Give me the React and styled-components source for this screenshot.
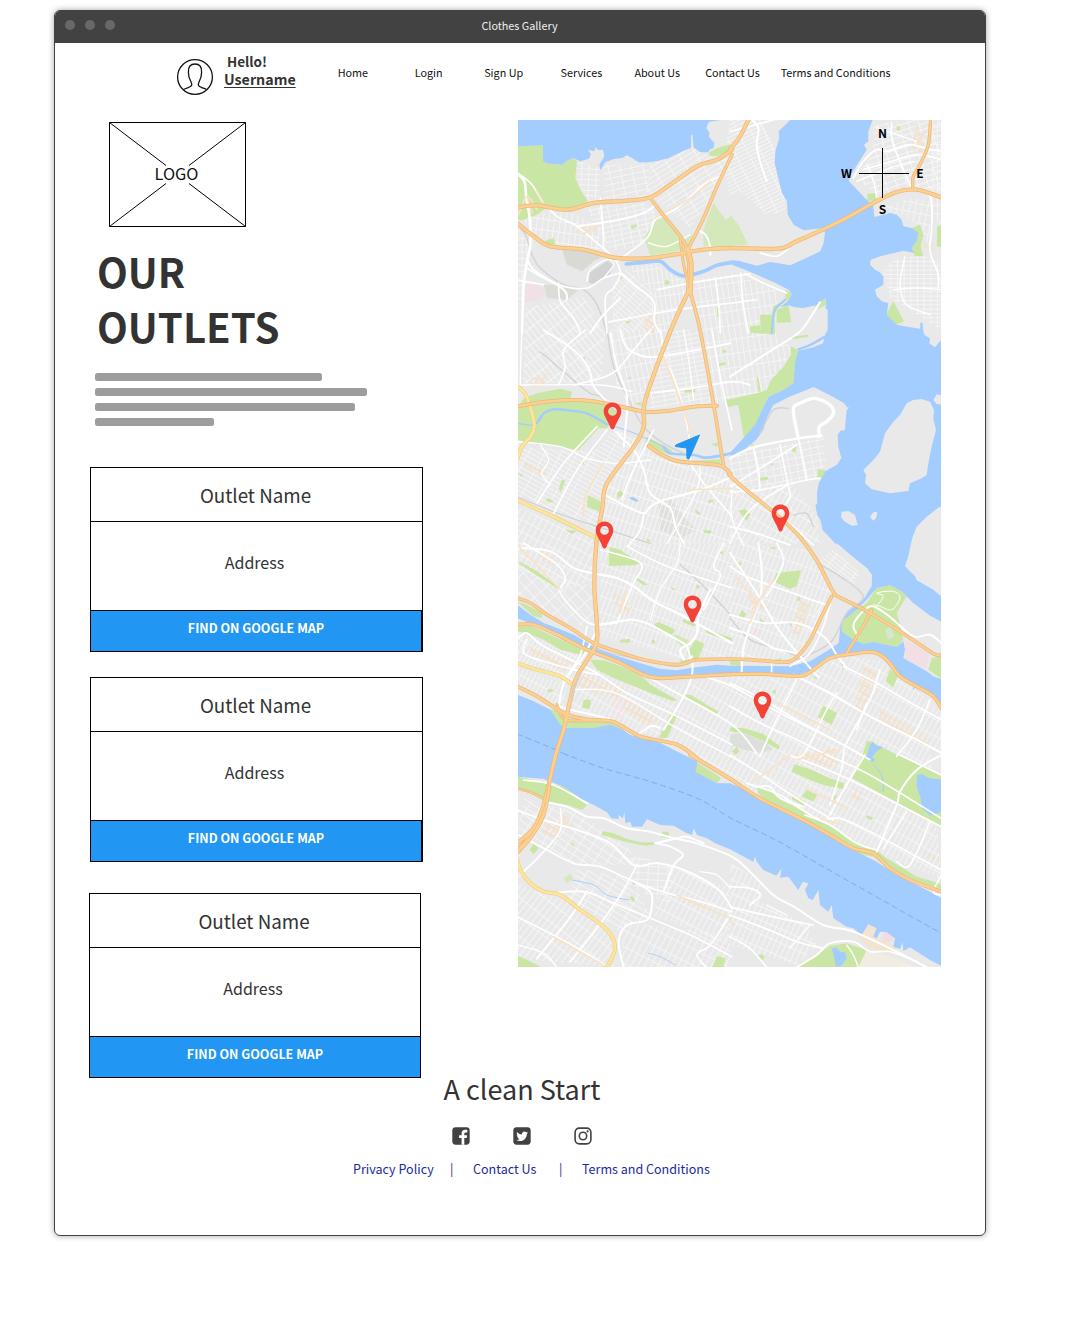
import React from "react";
import styled, { createGlobalStyle, css } from "styled-components";
import { FaTwitter } from "react-icons/fa";

const Global = createGlobalStyle`
  *, *::before, *::after { box-sizing: border-box; }
  body {
    margin: 0;
    background: #fff;
    font-family: "Noto Sans CJK SC", "Noto Sans", sans-serif;
    color: #333;
  }
`;

const Page = styled.div`
  min-height: 1335px;
  padding: 10px 0 0 54px;
`;

const Window = styled.div`
  display: flex;
  flex-direction: column;
  width: 932px;
  height: 1226px;
  border: 1px solid #424242;
  border-radius: 6px;
  box-shadow: 0 0 6px rgba(0, 0, 0, 0.35);
  overflow: hidden;
`;

const TitleBar = styled.div`
  display: grid;
  grid-template-columns: 120px 1fr 121px;
  height: 32px;
  flex: none;
  background: #424242;
`;

const Lights = styled.div`
  display: flex;
  gap: 10px;
  padding: 9px 0 0 10.4px;
`;

const Light = styled.span`
  width: 10px;
  height: 10px;
  border-radius: 50%;
  background: #686868;
`;

const WindowTitle = styled.span`
  color: #eee;
  font-size: 10.8px;
  line-height: 28px;
  text-align: center;
`;

const Header = styled.header`
  display: flex;
  height: 77px;
  padding-left: 121px;
`;

const Avatar = styled.svg`
  width: 38px;
  height: 38px;
  margin-top: 15px;
  fill: none;
  stroke: #111;
  stroke-width: 1.3;
`;

const Greeting = styled.div`
  display: flex;
  flex-direction: column;
  width: 91px;
  padding: 9px 0 0 10px;
  font-size: 13.5px;
  font-weight: 700;
  line-height: 18px;
`;

const Hello = styled.span`
  padding-left: 3px;
`;

const Username = styled.a`
  font-size: 14.25px;
  text-decoration: underline;
  text-decoration-thickness: 1px;
  text-underline-offset: 2px;
`;

const Nav = styled.nav`
  display: flex;
  padding-top: 19px;
  margin-left: 10px;
`;

const NavLink = styled.a`
  width: ${(p) => p.$w}px;
  font-size: 10.8px;
  line-height: 20px;
  text-align: center;
  color: #111;
`;

const Main = styled.main`
  display: grid;
  grid-template-columns: 463px 423px;
  height: 954px;
  flex: none;
`;

const Column = styled.section`
  display: flex;
  flex-direction: column;
  padding: 2px 0 0 34px;
`;

const Logo = styled.div`
  display: grid;
  place-items: center;
  width: 137px;
  height: 105px;
  margin-left: 20px;
  > * { grid-area: 1 / 1; }
`;

const LogoLines = styled.svg`
  width: 137px;
  height: 105px;
  fill: none;
  stroke: #000;
  stroke-width: 1;
`;

const LogoText = styled.span`
  font-size: 16.4px;
  line-height: 18px;
  color: #111;
  margin: 0 2px 4px 0;
`;

const Heading = styled.h1`
  width: 220px;
  margin: 16px 0 0 8px;
  font-size: 40.1px;
  font-weight: 700;
  line-height: 55px;
`;

const Blurb = styled.div`
  display: flex;
  flex-direction: column;
  gap: 7px;
  margin: 20px 0 0 6px;
`;

const BlurbLine = styled.span`
  width: ${(p) => p.$w}px;
  height: 8px;
  border-radius: 2.5px;
  background: #9d9d9d;
`;

const Cards = styled.div`
  margin-top: 41px;
`;

const Card = styled.article`
  display: flex;
  flex-direction: column;
  width: 333px;
  height: 185px;
  margin: 0 0 25px 1px;
  border: 1px solid #000;
  text-align: center;
  ${(p) => p.$last && css`
    width: 332px;
    margin: 31px 0 0 0;
  `}
`;

const OutletName = styled.h2`
  margin: 0;
  height: 54px;
  padding-right: 2px;
  border-bottom: 1px solid #000;
  font-size: 18.8px;
  font-weight: 400;
  line-height: 54px;
`;

const Address = styled.p`
  margin: 0;
  height: 88px;
  padding-right: 4px;
  font-size: 16px;
  line-height: 80px;
`;

const FindButton = styled.button`
  height: 41px;
  padding: 0 0 7px;
  border: 0 solid #000;
  border-top-width: 1px;
  border-right-width: ${(p) => (p.$flush ? 0 : 1)}px;
  background: #2196f3;
  color: #fff;
  font: 700 12.5px/18px "Noto Sans CJK SC", "Noto Sans", sans-serif;
`;

const MapFrame = styled.section`
  display: grid;
  width: 423px;
  height: 847px;
  position: relative;
`;

const MapArt = styled.svg`
  display: block;
  width: 423px;
  height: 847px;
`;

const Marker = styled.svg`
  position: absolute;
  overflow: visible;
`;

const Compass = styled.div`
  position: absolute;
  left: 320px;
  top: 5px;
  display: grid;
  grid-template: 19px 57px 19px / 17px 56px 18px;
  place-items: center;
  color: #000;
  font-size: 12px;
  font-weight: 700;
  line-height: 18px;
`;

const CompassPoint = styled.span`
  grid-area: ${(p) => p.$area};
  ${(p) => p.$pole && css`
    align-self: start;
    line-height: 15px;
    margin-right: 1px;
  `}
`;

const CompassCross = styled.svg`
  grid-area: 2 / 2;
  width: 52px;
  height: 52px;
  stroke: #000;
  stroke-width: 1;
`;

const Footer = styled.footer`
  display: flex;
  flex-direction: column;
  width: 400px;
  margin-left: 267px;
`;

const Slogan = styled.h3`
  margin: 0;
  font-size: 27px;
  font-weight: 400;
  line-height: 30px;
  text-align: center;
`;

const Social = styled.div`
  display: flex;
  justify-content: center;
  gap: 41px;
  margin: 22px 0 0 0;
  color: #424242;
`;

const SocialIcon = styled.svg`
  display: block;
  width: 20px;
  height: 20px;
`;

const Legal = styled.div`
  display: grid;
  grid-template-columns: 97px 23px 86px 23px auto;
  padding-left: 31px;
  margin-top: 12px;
  color: #1a2a9c;
  font-size: 12.55px;
  line-height: 22px;
  white-space: nowrap;
`;

const LegalItem = styled.a`
  color: inherit;
`;

/* The map is drawn on eight sheets, each with its own origin. */
const SHEETS = {
  A: [0, 0], B: [639, 0],
  C: [0, 636], D: [639, 636],
  E: [0, 1275], F: [639, 1275],
  G: [0, 1911], H: [639, 1911],
};

function points(spec) {
  let origin = SHEETS.A;
  const out = [];
  spec.trim().split(/\s+/).forEach((t) => {
    if (SHEETS[t]) { origin = SHEETS[t]; return; }
    const [x, y] = t.split(",").map(Number);
    out.push([x + origin[0], y + origin[1]]);
  });
  return out;
}

const area = (spec) => "M" + points(spec).map((p) => p.join(" ")).join("L") + "Z";

function road(spec) {
  const p = points(spec);
  let d = `M${p[0][0]} ${p[0][1]}`;
  for (let i = 0; i < p.length - 1; i++) {
    const a = p[i - 1] || p[i], b = p[i], c = p[i + 1], e = p[i + 2] || c;
    d += `C${b[0] + (c[0] - a[0]) / 6} ${b[1] + (c[1] - a[1]) / 6} ${c[0] - (e[0] - b[0]) / 6} ${c[1] - (e[1] - b[1]) / 6} ${c[0]} ${c[1]}`;
  }
  return d;
}

const WATER = [
  "A 0,0 610,6 575,12 568,30 578,45 575,55 592,75 590,90 577,95 575,103 550,103 530,88 526,50 522,50 522,90 500,98 480,108 455,120 425,128 395,133 365,133 345,120 330,112 315,120 290,123 265,133 250,157 247,140 262,115 258,95 245,97 235,88 232,100 212,95 222,108 216,122 190,130 168,120 150,128 135,141 115,138 95,137 78,130 78,82 0,85",
  "B 187,0 146,40 148,60 136,100 134,135 146,185 156,225 171,250 173,290 191,320 221,337 281,330 285,345 281,375 271,400 246,412 181,442 121,432 81,443 51,435 26,428 0,428 0,438 45,455 91,475 141,497 176,515 186,527 173,550 150,568 176,562 195,568 221,570 261,560 286,540 289,560 286,570 293,575 293,645 D 292,0 286,12 279,40 250,52 205,62 196,90 190,160 160,180 116,200 96,240 75,285 40,325 0,368 0,377 35,365 78,330 100,300 112,260 130,225 175,202 251,171 306,199 341,219 354,234 362,228 350,240 347,270 345,300 330,303 323,315 325,350 334,384 321,404 286,424 275,445 266,460 261,490 262,520 256,525 262,555 271,570 278,600 320,645 F 320,0 361,35 411,75 426,95 425,130 400,170 355,205 332,240 326,300 290,325 240,355 200,365 170,370 0,368 E 600,365 520,375 480,382 430,378 350,355 290,335 230,310 170,275 120,255 80,240 40,215 0,185 0,225 30,237 90,265 150,297 200,320 290,350 380,393 440,402 540,394 645,390 F 0,392 200,397 250,380 300,347 350,330 420,325 450,335 490,380 540,420 600,450 645,500 645,412 610,400 590,385 520,345 525,320 520,295 500,312 470,305 430,297 400,302 370,290 335,265 337,235 380,200 410,170 440,135 480,127 515,145 535,165 550,180 600,218 645,242 645,170 610,140 560,112 555,100 525,70 535,40 543,0 D 548,620 560,590 590,560 625,533 645,525 645,30 634,30 625,40 615,52 598,40 600,25 583,15 580,0 B 580,645 578,616 572,612 570,632 540,628 500,620 470,590 475,555 455,550 440,535 435,515 460,500 460,475 448,462 435,455 420,440 422,425 450,415 520,398 552,405 545,390 560,370 565,345 545,330 520,325 515,305 500,290 480,285 433,297 430,265 410,245 357,190 360,175 410,95 402,80 415,70 415,40 430,0",
  "E 0,455 50,475 100,500 130,545 150,555 230,555 280,545 370,580 430,600 500,635 540,655 G 540,30 535,50 600,85 639,85 H 60,110 100,140 200,185 300,240 380,290 440,320 500,360 590,405 645,435 645,637 600,615 540,577 520,588 518,562 510,582 490,575 495,550 470,532 450,530 440,550 430,545 440,520 415,508 395,540 370,520 350,515 310,490 305,450 295,470 270,450 265,405 248,435 235,430 225,405 235,385 218,380 205,405 175,365 150,368 155,340 140,362 100,345 80,320 75,305 70,320 0,283 G 595,265 570,250 540,240 530,220 525,240 510,235 470,212 430,210 390,193 375,215 345,215 340,200 325,205 322,170 318,190 305,180 305,192 283,190 270,172 230,150 190,130 140,95 80,72 0,65",
  "H 562,60 575,58 600,70 645,75 645,170 600,180 575,160 572,130 560,95",
  "H 305,580 320,578 330,590 345,592 350,610 335,632 318,636 312,605",
  "F 420,605 430,597 440,608 460,612 440,625 425,645 410,645",
  "H 408,0 420,0 435,14 430,22 415,15",
  "C 335,502 350,502 365,512 360,516 345,510",
];

const ISLANDS = [
  "D 575,207 600,215 612,240 610,265 618,300 605,350 595,400 590,435 575,445 540,460 535,483 480,490 425,478 405,460 408,435 400,420 430,390 450,365 465,310 490,275 510,255 530,220 550,210",
  "D 335,545 355,543 375,555 383,585 365,587 345,575 333,562",
  "D 420,560 432,545 442,547 438,565 430,572",
  "D 610,210 620,193 645,198 645,225 620,222",
];

const PARKS = [
  "A 0,85 78,82 78,130 95,137 115,138 135,141 150,128 168,120 180,130 175,180 190,215 213,250 160,270 90,268 60,290 10,308 0,300",
  "A 575,105 600,90 645,78 645,95 600,115 580,115",
  "A 80,370 110,360 115,378 95,385", "A 340,325 358,318 360,325 345,333",
  "A 443,487 457,487 457,500 443,500", "A 600,570 608,570 610,597 600,597", "A 303,480 310,472 318,482", "A 325,610 345,608 330,617",
  "B 412,227 435,225 438,245 412,250",
  "B 545,330 570,320 580,350 572,385 580,415 555,415 545,390 560,370",
  "B 622,325 645,320 645,390 620,385", "B 490,550 522,610 495,622 460,605", "B 500,25 510,25 510,38 500,36",
  "B 167,515 187,525 175,545 140,570 133,600 135,645 92,645 90,590 125,590 130,565 165,545",
  "B 140,575 175,562 184,612 140,615", "B 60,625 90,622 90,645 62,645", "B 240,555 265,540 285,540 288,560 265,572",
  "D 60,0 135,0 133,14 65,8", "D 183,20 235,14 235,20 185,28",
  "D 182,48 205,62 196,90 190,160 160,180 116,200 96,240 75,300 65,335 42,325 25,225 0,228 0,208 80,190 110,180 123,150 160,110 183,75",
  "C 20,205 60,190 130,176 165,185 160,205 240,215 290,235 300,260 270,295 245,295 185,360 0,330 0,240",
  "C 503,180 535,178 535,186 503,188", "C 605,100 625,97 625,105 605,108", "C 625,208 645,208 645,230 628,230", "C 617,60 628,60 628,68 617,68",
  "C 193,82 205,82 205,88 193,88", "C 330,145 340,140 342,148", "C 352,220 375,217 372,228",
  "C 390,320 425,340 465,360 460,375 420,360 385,338", "C 490,395 610,388 610,400 520,405",
  "C 212,495 250,513 248,545 210,530", "C 300,490 312,480 320,493 302,507", "C 125,475 135,448 145,452 132,487",
  "C 85,510 95,504 112,515 95,518", "C 145,600 180,602 165,613", "C 558,600 585,602 580,612 562,608", "C 535,538 550,550 545,556 535,545",
  "C 572,512 588,508 588,516 575,518", "C 580,342 605,338 600,350", "C 3,428 18,436 12,440", "C 190,397 200,394 202,405",
  "C 260,465 272,462 270,475 258,480", "C 385,625 402,632 395,636",
  "D 263,418 286,420 280,445 262,443", "D 187,350 198,346 198,368 187,365", "D 90,443 115,440 112,450 90,452", "D 25,542 45,537 62,553 50,573",
  "D 80,142 85,142 92,185 85,185", "D 60,338 65,335 73,355 68,358", "D 120,402 130,398 128,408",
  "E 277,12 310,20 370,62 350,67 275,69", "E 358,102 392,125 380,127 358,112", "E 413,243 425,237 475,260 465,275 415,257",
  "E 535,290 562,302 545,345 530,350 510,330", "E 565,258 645,285 645,298 570,270", "E 497,228 540,245 530,250 497,238",
  "E 500,455 520,455 603,505 600,513 560,495 510,468",
  "E 460,515 482,515 450,585 425,585", "E 200,470 222,470 218,497 195,495", "E 90,440 107,438 108,446 93,448",
  "E 460,132 475,138 470,143", "E 537,126 550,128 545,138 538,137", "E 405,290 415,293 412,303 405,300", "E 310,290 340,288 338,300 308,298",
  "E 0,175 30,185 75,210 75,225 50,220", "E 0,250 45,250 120,285 210,325 190,335 130,320 80,290 30,270 0,265",
  "E 220,350 260,352 300,365 370,395 400,425 480,470 470,475 400,450 350,430 290,405 240,380",
  "E 100,500 125,500 150,530 270,535 330,555 375,585 330,572 280,548 230,555 160,555 130,552",
  "E 5,55 60,85 130,135 125,138 55,95 5,60", "E 487,350 520,350 515,362 495,360", "E 605,27 618,25 618,35",
  "F 140,90 213,82 200,130 180,138 130,115", "F 35,200 48,212 40,228 25,222", "F 90,225 102,235 98,245 90,240", "F 205,160 212,162 208,175 200,172",
  "F 175,240 187,232 185,252", "F 120,12 137,12 132,20", "F 24,58 34,58 34,66 24,66",
  "F 280,488 321,510 305,545 263,522", "F 480,378 503,400 490,433 467,415", "F 125,445 138,440 136,455", "F 242,400 265,402 258,408", "F 335,360 345,365 338,383",
  "F 410,180 440,135 480,127 515,145 530,160 500,210 510,240 520,290 500,312 470,305 430,297 400,302 370,290 335,265 337,235 380,200",
  "F 605,345 645,340 645,415 595,380", "F 605,145 645,165 645,172 608,155",
  "F 0,553 40,555 100,573 150,610 145,620 100,595 50,572 0,565", "F 5,625 20,612 28,625 18,636",
  "F 425,597 510,640 645,700 H 634,70 634,215 365,68 398,0 415,-15 F 400,640",
  "F 0,352 30,355 30,368 0,365", "F 135,350 155,345 150,360", "F 410,595 430,595 410,645 395,645",
  "G 0,65 40,73 90,82 145,97 210,150 195,165 150,150 95,145 60,125 0,98", "G 530,15 600,60 612,70 600,85 530,50",
  "G 255,228 290,235 330,252 370,262 415,262 425,268 385,272 330,262 255,240", "G 50,265 65,280 50,297 38,285", "G 435,230 455,230 455,248 432,246",
  "G 160,262 172,268 168,275", "G 337,428 345,422 355,435 350,440", "G 0,600 30,615 75,637 0,637", "G 585,637 600,603 625,610 620,637", "G 345,382 355,385 350,392",
  "H 80,98 115,105 155,135 230,175 300,210 370,255 400,275 440,285 470,310 520,340 560,365 645,390 645,405 560,380 480,345 430,305 370,295 300,250 200,198 120,150 85,115",
  "H 192,28 240,42 300,70 342,85 340,102 280,90 240,75 185,50", "H 187,122 225,140 220,152 185,133", "H 230,105 262,120 250,140 215,125",
  "H 410,180 430,188 425,196 408,188", "H 85,602 95,597 105,605 98,615 85,612", "H 305,125 320,120 315,135",
  "H 300,572 350,565 410,585 385,637 200,637 260,600",
];

const PALE_PARKS = [
  "A 415,305 440,300 480,340 500,370 525,345 525,370 500,395 400,413 382,360",
  "A 590,255 625,305 645,295 645,385 560,385 558,340 575,290",
  "B 0,290 25,320 55,380 0,382",
  "G 140,370 160,358 168,370 150,385",
  "E 460,280 480,275 520,295 500,315",
];

const PALE = [
  ["#dadad4", "A 135,395 180,398 200,392 260,415 230,430 195,460 150,440"],
  ["#d3d3d3", "A 218,465 270,428 288,440 278,470 235,497 215,495"],
  ["#dcdcd6", "A 80,500 130,500 185,515 150,545 90,540"],
  ["#f1e0e6", "A 25,500 60,498 88,522 70,545 25,552"],
  ["#f1dfe4", "F 525,290 560,305 598,335 585,377 525,345"],
  ["#f1e3e6", "E 290,470 330,475 315,530 285,505"],
  ["#f0e1e5", "F 65,255 95,252 95,275 70,275"],
  ["#e0e0dd", "C 425,515 460,505 500,560 540,600 490,625 430,600"],
  ["#f2e4d0", "H 380,540 410,508 440,520 440,550 500,575 500,600 420,580"],
  ["#f0dde3", "H 460,532 488,540 490,560 460,560"],
  ["#f2ede2", "H 400,590 470,600 560,637 385,637"],
];

/* outline, rotation, block width, block height */
const BLOCKS = [
  ["A 180,130 250,150 245,250 215,250 180,185", 2, 22, 16],
  ["A 260,140 400,140 390,235 260,245", 78, 18, 34],
  ["A 400,135 520,90 640,130 610,200 520,330 420,245 385,230", -32, 44, 14],
  ["A 20,310 90,280 170,285 250,330 250,395 120,380 60,350", 8, 17, 32],
  ["A 210,270 380,255 430,290 380,380 280,400", -12, 26, 15],
  ["A 0,330 35,370 20,560 0,560", 0, 14, 20],
  ["A 25,570 200,535 265,645 C 250,160 20,160", -38, 15, 40],
  ["A 285,500 330,450 410,530 410,645 290,640", 42, 36, 12],
  ["A 330,440 420,440 500,490 510,520 460,640 410,640 400,520", -8, 14, 42],
  ["A 530,485 640,465 B 150,520 130,640 D 190,60 100,200 0,210 C 575,225 550,0 A 535,540", -9, 17, 42],
  ["C 270,0 450,0 390,200 340,230 290,150", -12, 16, 42],
  ["C 470,0 550,0 585,230 400,235 400,160", -10, 36, 14],
  ["C 0,350 230,365 290,300 370,330 265,460 240,600 0,510", 29, 43, 13],
  ["C 300,300 380,340 480,400 610,420 645,450 645,640 250,640 270,470 350,360", 18, 14, 42],
  ["C 0,530 240,630 E 230,110 130,150 0,70", 28, 18, 32],
  ["E 250,0 645,0 645,340 500,350 250,280", 20, 14, 45],
  ["E 0,70 230,130 230,260 100,220 0,160", -42, 25, 38],
  ["E 0,265 200,340 160,430 0,360", 28, 12, 32],
  ["E 0,370 150,430 140,490 0,440", 28, 13, 35],
  ["E 240,370 440,430 640,400 F 200,405 340,340 450,350 640,510 640,620 600,620 H 634,370 450,300 0,75 G 530,0 E 370,570 160,490 190,390", 29, 15, 44],
  ["A 620,130 B 0,0 90,0 130,80 170,280 110,290 30,220 0,240", -26, 36, 11],
  ["B 430,20 590,0 640,10 640,220 560,210 440,230 380,180 430,100", -18, 30, 17],
  ["B 600,10 640,10 640,320 600,300", 0, 14, 26],
  ["B 455,270 540,240 600,250 600,400 570,320 510,290", 12, 18, 28],
  ["B 490,425 580,410 640,440 640,640 580,600 480,540 460,460", 0, 20, 13],
  ["D 0,375 280,320 290,400 265,445 0,480", -11, 24, 20],
  ["D 0,490 180,450 260,560 270,640 0,640", 30, 16, 38],
  ["F 0,0 230,20 310,150 220,320 130,350 0,345", 20, 14, 44],
  ["F 310,20 390,90 370,130 260,60", 38, 40, 11],
  ["F 265,170 310,180 200,350 170,350 230,300", -58, 30, 12],
  ["G 20,130 180,170 330,270 370,330 180,330 0,240", 33, 32, 20],
  ["G 0,380 60,410 130,430 220,480 290,560 290,637 0,610", -52, 46, 16],
  ["G 340,300 470,330 460,450 350,400", 3, 30, 20],
  ["G 180,340 340,370 400,480 310,530 150,430", 31, 42, 16],
  ["G 320,500 640,540 640,637 310,637", 27, 18, 44],
  ["G 470,340 640,400 640,570 400,480", 28, 16, 44],
  ["H 0,320 90,380 100,450 220,500 260,570 200,630 0,570", 24, 16, 38],
];

const LAWNS = [
  ["#dde0da", "F 0,575 40,568 75,585 110,600 130,620 90,630 40,620 0,605"],
  ["#d5e7cd", "F 465,262 480,250 495,280 475,290"],
];

const HATCH_TINT = [
  "E 200,390 330,440 300,470 180,430", "E 40,310 170,360 150,390 40,340", "E 320,465 430,530 380,550 320,495", "E 290,150 350,190 330,210 290,180",
  "F 400,370 445,385 400,505 375,490", "F 450,500 605,590 585,610 450,530", "H 185,0 315,-20 325,40 260,30", "F 210,175 245,185 210,275 185,270",
  "F 55,140 120,190 100,205 60,180", "G 85,205 130,215 125,255 75,235", "G 130,170 170,205 160,225 125,210", "H 0,490 15,500 12,515 0,510",
  "A 175,320 240,320 240,340 175,345", "A 380,590 425,580 420,645 385,645", "B 550,40 590,40 570,115 545,90", "B 580,378 612,372 612,395 582,392",
  "C 40,145 90,130 80,175 40,170", "C 20,395 90,420 85,440 20,410", "E 65,10 125,60 110,75 65,40", "H 370,100 405,118 385,145 360,125",
  "G 110,540 150,555 145,570 110,555", "G 480,420 570,450 560,460 480,430", "H 575,285 634,315 634,330 580,300",
];

const STREETS = [
  [8, "A 0,165 22,190 28,240 38,300 40,380 30,430 20,500 15,645"], [5, "A 10,170 45,200 75,250"],
  [5, "A 30,450 80,480 140,505 210,510 260,480 310,465"], [5, "A 125,495 130,550 170,600 190,645"],
  [6, "A 30,420 50,455 140,515 150,545"], [5, "A 95,270 120,295 180,325 240,375 290,420 310,465 290,510 265,540 270,645"],
  [5, "A 250,240 258,330 260,395"], [6, "A 180,325 250,315 330,300 390,280 415,260"],
  [5, "A 300,430 390,360 415,305 480,270 560,200 610,175"], [6, "A 310,465 350,500 410,550 412,610 430,645"],
  [5, "A 0,485 20,490 80,500"], [6, "A 540,335 565,350 578,380 580,410"], [5, "A 420,515 520,495 645,475 B 60,468"],
  [5, "A 275,612 420,585 530,568 645,555 B 80,545"], [5, "A 595,480 605,560 610,645"], [4, "A 395,375 450,385 520,350"],
  [4, "A 210,490 220,455 270,425 290,440 260,480"], [6, "A 310,540 260,590 220,645"],
  [6, "B 60,0 85,30 80,80 90,130 110,190"], [5, "B 0,40 60,25 150,0"], [5, "B 45,467 100,495 170,525 "], [5, "B 32,465 40,560 55,645"], [6, "B 270,553 240,600 205,645 D 110,70 0,140"],
  [4, "B 410,140 430,190 440,235"], [6, "B 370,180 400,130 440,95 470,100 540,80 600,95 634,98"], [5, "B 400,155 470,135 560,110 634,125"], [5, "B 550,215 600,235 605,330 600,400 625,470 625,510"],
  [4, "B 380,190 480,150 550,130"], [4, "B 490,515 560,510 634,515"], [4, "B 525,415 510,500 530,560 600,590"], [4, "B 440,30 560,70"], [5, "B 485,15 490,80 545,210"], [5, "B 90,405 140,415 175,392"],
  [4, "C 15,0 10,160 20,175"], [4, "C 3,165 250,165 345,185"], [6, "C 80,0 170,60 215,115 230,170 285,230"], [5, "C 205,0 140,60 145,110 125,165"],
  [6, "C 310,0 320,35 345,65 420,80 640,40"], [5, "C 400,0 350,60 300,120 250,145 170,165"], [5, "C 395,190 520,175 645,155 D 60,165"], [5, "C 430,0 445,90 470,140 500,240 515,310 520,390"],
  [6, "C 280,10 300,110 330,200 325,300 320,350"], [5, "C 585,0 610,140 645,300"], [4, "C 500,0 515,90 530,210"], [6, "C 285,295 350,360 380,420 400,490 460,535 475,590 500,640"],
  [5, "C 270,300 180,420 110,550"], [5, "C 240,290 140,400 60,520"], [6, "C 265,495 330,530 380,550 400,530 440,510 550,480 645,440"], [5, "C 410,300 340,440 315,510"],
  [4, "C 0,335 130,350 210,385 300,400 400,390"], [4, "C 70,345 95,390 75,430 100,465"], [5, "C 520,400 560,460 620,530 645,560"], [5, "C 380,555 370,600 340,640 E 330,10"], [4, "C 550,410 540,480 480,590 450,640"],
  [7, "E 250,95 300,105 350,130 410,175 500,220 645,300 "], [6, "E 0,15 100,25 170,75 250,95"], [5, "E 250,20 370,60 350,120 320,190 300,240"], [5, "E 330,10 450,70 645,135"],
  [5, "E 20,0 120,65 145,110 130,150 200,230 240,245 300,240"], [6, "E 245,245 310,235 350,230 400,245 480,290 510,310 520,350"], [7, "E 580,140 545,220 540,270 520,300 490,320 500,350"],
  [5, "E 620,0 590,70 610,100 560,200"], [4, "E 490,0 480,60 430,140 400,230"], [6, "E 235,270 200,340 170,375 140,420 125,490"], [5, "E 210,250 190,335 150,400"],
  [5, "E 5,285 30,270 80,310 230,385 330,450 480,520 645,605"], [5, "E 30,290 20,330 80,355 170,380 240,395"], [4, "E 170,440 250,440 330,465 470,550 640,640"], [6, "E 525,340 525,395 500,460 440,560"],
  [5, "E 350,380 480,450 645,545 F 80,630"], [5, "E 560,400 645,430 F 150,510 330,600 400,640"], [6, "E 120,490 180,505 280,530 350,575 400,550 430,555"],
  [6, "F 0,30 80,150 150,265 245,380 265,402"], [6, "F 85,0 95,80 90,170 60,250 40,320 35,385"], [5, "F 0,70 60,105 160,140 300,190"], [6, "F 0,215 100,240 200,240 280,280 320,335 350,375"],
  [5, "F 300,180 280,250 240,330 180,370"], [5, "F 140,0 160,60 110,160"], [6, "F 0,255 70,280 130,315 200,330"], [5, "F 125,360 125,388"],
  [6, "F 190,395 300,450 420,520 560,590 634,630"], [5, "F 340,370 440,420 560,490 634,530"], [5, "F 0,420 100,470 200,530 330,600 420,650"], [5, "F 450,380 420,470 350,600 340,640 H 335,40 300,150"],
  [6, "F 385,280 370,250 385,220 420,190 450,200 490,230 550,280 600,275 634,300"], [3, "F 440,190 460,160 440,150 490,145 510,165 485,200 450,190 430,185"],
  [5, "F 600,470 560,560 500,640"], [5, "F 410,480 380,560"], [5, "F 200,410 130,550 90,640"], [5, "F 320,450 290,500 230,620 200,650"], [5, "F 0,490 90,540 200,590 300,640 H 420,60 634,190"],
  [5, "G 20,75 110,90 210,145"], [6, "G 0,165 80,195 180,225 280,265 350,330 420,325 500,345 600,400 645,460"], [6, "G 80,140 150,155 210,185 260,190 330,220 400,230 470,250 540,265 645,305 H 60,350 130,420 200,460 280,510 370,530 500,590 590,637"],
  [6, "G 415,265 480,250 510,245 560,265"], [6, "G 415,265 460,275 498,300 470,330 440,410"], [5, "G 130,160 130,225 80,290 10,360"], [5, "G 5,240 90,285 170,325 250,335 330,370 420,405 550,440 645,470"],
  [5, "G 95,415 200,410 280,440 400,490 520,540 645,605"], [5, "G 360,330 310,420 240,520 160,620"], [6, "G 60,610 150,500 210,410"], [6, "G 320,637 305,560 330,510 390,495 405,450 400,410 350,380"],
  [5, "G 0,485 90,530 200,590 270,637"], [4, "G 0,570 80,595 120,637"], [5, "G 580,650 540,600 580,570 640,480"], [4, "G 550,350 600,360 640,400"],
  [5, "H 50,85 150,120 260,190 330,190 420,230 634,345"], [5, "H 0,0 80,50 200,130 310,195"], [5, "H 180,0 350,70 634,215 "], [5, "H 405,0 350,90 300,180"], [6, "H 634,0 560,45 510,110 500,150 440,290"],
  [5, "H 80,95 120,95 150,130 220,155"], [5, "H 225,180 300,210 380,265 440,285"], [5, "H 634,60 510,0"], [5, "H 530,170 460,280"], [5, "H 600,200 540,330 500,320"],
  [5, "H 0,545 60,580 110,637"], [5, "H 0,455 60,470 150,490 250,510"], [5, "H 0,395 60,400 90,420 60,450"], [5, "H 0,480 130,530 200,560 280,580"],
  [5, "H 200,637 260,600 300,565 370,560 420,590 480,590 560,620"], [4, "H 110,450 170,480"], [4, "H 385,637 370,600 350,570"], [5, "H 634,360 610,410 634,420"], [4, "H 180,580 240,510"],
  [10, "D 205,325 190,240 210,220 255,205 300,225 310,250 290,275 268,290 268,320"], [7, "D 0,385 70,352 205,325 275,317"], [5, "D 0,470 50,440 200,345"], [5, "D 150,345 175,470 180,500 150,545"],
  [5, "D 205,325 230,450"], [5, "D 0,485 90,480 230,450 270,445"], [5, "D 70,350 85,420 90,480"], [5, "D 20,470 120,530 250,645"], [5, "D 0,590 80,610 180,645"], [5, "D 180,460 60,540 0,640"], [4, "D 8,470 5,560 40,645"],
];

const RAILS = [
  "A 0,320 25,350 45,410 70,450 140,500 200,515 240,560 270,645", "C 270,0 290,110 330,200 380,290 440,340 500,370", "C 70,65 180,160 220,190 250,200 300,250", "C 0,500 150,560 400,640",
  "E 230,315 300,335 400,355 470,370 520,360", "F 260,60 330,100 400,160 350,210 300,300 200,350", "D 190,555 230,550 250,590", "D 90,310 130,240 175,235", "E 490,65 560,130 645,220",
  "F 0,225 60,290 150,320 200,340", "A 220,490 280,445", "A 225,495 285,452",
];

const TAN = [
  "A 195,350 240,325", "A 415,300 520,240 580,190", "B 560,20 570,80", "C 260,400 205,500 200,560", "C 440,80 510,270 515,310", "E 0,5 130,140", "F 85,180 20,105", "F 90,170 60,240", "F 140,480 300,560",
  "F 330,620 200,650", "H 70,80 180,0", "H 230,100 350,160", "G 480,420 640,490", "G 110,545 270,637", "E 330,140 310,210", "C 645,475 510,480", "F 130,110 60,210", "H 270,190 340,210",
  "A 5,290 30,235 60,275", "A 30,235 45,285", "A 60,220 80,255",
];

const YELLOW = [
  "C 0,168 20,185 35,215 52,285 40,320 15,350 0,390", "C 0,510 120,565 240,625", "E 0,360 60,380 130,400 165,425", "G 0,310 10,345 40,385 80,410 130,420 190,465 260,515 290,555 292,590 270,637",
];

const HIGHWAYS = [
  [13, "A 0,268 60,262 150,275 230,255 330,248 400,238 460,200 540,145 600,125 645,95"], [13, "B 0,95 30,55 58,0"], [11, "A 645,110 600,205 560,300 515,390"], [11, "A 400,240 430,280 490,355 515,400"],
  [13, "A 0,315 50,355 100,385 200,395 300,420 400,420 470,410 560,395 645,390 B 145,392 200,370 330,310 430,255 500,222 560,215 634,238"], [10, "B 602,0 595,80 570,140 550,175 548,215"],
  [20, "A 510,395 520,440 517,520"], [9, "A 490,365 500,440 515,500"], [13, "A 517,515 460,640 C 385,210 380,290 350,350 270,460 255,540 238,640 E 232,130 240,250 235,310 180,400 160,470 140,560 115,640 G 80,150 50,220 0,265"],
  [11, "A 518,515 550,640 C 590,225 620,410"], [12, "C 0,229 100,214 200,211 290,225 385,245 450,243 530,230 600,227"],
  [12, "C 395,348 430,372 480,393 550,400 610,407 640,430 D 0,437 60,490 130,545 200,610 F 235,15 265,60 300,130 315,155"], [11, "F 312,155 420,210 540,285 610,332 634,337"],
  [11, "F 305,160 270,230 235,300 190,350 150,357 60,350 0,348 E 540,350 520,355 480,365 380,350 300,325 230,300 160,255 90,215 40,180 0,165"],
  [12, "E 0,245 50,245 120,275 210,320 300,355 400,402 500,402 645,394 F 100,393 210,399 250,380 300,345 370,332 430,328 470,350 510,400 560,430 610,460 634,495"],
  [10, "F 350,330 405,240 425,200"], [12, "E 0,430 60,460 150,515 220,530 290,537 370,580 480,605 545,650 G 520,0 580,35 645,75 H 90,130 220,195 300,240 370,280 430,295 480,340 540,375 634,410"],
  [9, "E 120,485 145,530 230,533"], [17, "G 95,100 75,185 40,245 0,290"], [8, "G 0,100 40,112 80,130"],
];

const CREEKS = [
  [11, "A 328,438 380,433 430,430 460,455 500,474 560,460 600,442 650,432"],
  [7, "C 60,280 80,250 110,238 160,242 210,250 270,283"], [4, "C 0,280 50,285 75,262"], [3, "C 270,283 340,305 420,340 450,355"], [8, "C 440,350 460,370 530,375 570,383 645,370"],
  [6, "B 165,545 135,575 130,600 125,645"], [3, "G 165,375 230,390 270,420 335,435"], [2.5, "G 395,595 430,605 475,630"], [3, "H 430,30 455,60 460,110"],
  [4, "B 405,440 420,442"], [3, "F 550,440 560,415"], [7, "D 285,20 240,45 205,58"],
];

const BORDER_LINE = "E 0,573 80,605 150,636 G 150,0 260,40 400,80 545,132 639,188 H 150,262 350,375 500,460 634,535";

function CityMap() {
  return (
    <MapArt viewBox="3 6 1269 2541" preserveAspectRatio="none" aria-label="City map">
      <defs>
        {BLOCKS.map(([, angle, w, h], i) => (
          <pattern key={i} id={`blocks${i}`} width={w} height={h} patternUnits="userSpaceOnUse" patternTransform={`rotate(${angle})`}>
            <path d={`M0 1.3H${w}M1.3 0V${h}`} stroke="#f7f7f7" strokeWidth="2.6" />
          </pattern>
        ))}
        <pattern id="tan" width="15" height="22" patternUnits="userSpaceOnUse" patternTransform="rotate(28)">
          <path d="M0 2H15M2 0V22" stroke="#f6dfc4" strokeWidth="4" />
        </pattern>
      </defs>
      <rect width="1280" height="2560" fill="#e9e9e9" />
      {PALE.map(([fill, d]) => <path key={d} d={area(d)} fill={fill} />)}
      {BLOCKS.map(([d], i) => <path key={i} d={area(d)} fill={`url(#blocks${i})`} />)}
      {HATCH_TINT.map((d) => <path key={d} d={area(d)} fill="url(#tan)" />)}
      <g fill="#d4e8ba">{PALE_PARKS.map((d) => <path key={d} d={area(d)} />)}</g>
      <g fill="#cae6a4">{PARKS.map((d) => <path key={d} d={area(d)} />)}</g>
      {LAWNS.map(([fill, d]) => <path key={d} d={area(d)} fill={fill} />)}
      <g fill="#a3ccff">{WATER.map((d) => <path key={d} d={area(d)} />)}</g>
      <g fill="#e9e9e9">{ISLANDS.map((d) => <path key={d} d={area(d)} />)}</g>
      <g fill="none" strokeLinecap="round" strokeLinejoin="round">
        <g stroke="#a3ccff">{CREEKS.map(([w, d]) => <path key={d} d={road(d)} strokeWidth={w} />)}</g>
        <g stroke="#d2d2d2" strokeWidth="4">{RAILS.map((d) => <path key={d} d={road(d)} />)}</g>
        <g stroke="#fff">{STREETS.map(([w, d]) => <path key={d} d={road(d)} strokeWidth={w} />)}</g>
        <g stroke="#f9e3c8" strokeWidth="5">{TAN.map((d) => <path key={d} d={road(d)} />)}</g>
        <path d={road(BORDER_LINE)} stroke="#8faad0" strokeWidth="3" strokeDasharray="18 10" strokeLinecap="butt" />
        <g stroke="#ecd088" strokeWidth="12">{YELLOW.map((d) => <path key={d} d={road(d)} />)}</g>
        <g stroke="#fde69c" strokeWidth="8">{YELLOW.map((d) => <path key={d} d={road(d)} />)}</g>
        <g stroke="#ecb878">{HIGHWAYS.map(([w, d]) => <path key={d} d={road(d)} strokeWidth={w} />)}</g>
        <g stroke="#fbd092">{HIGHWAYS.map(([w, d]) => <path key={d} d={road(d)} strokeWidth={w - 4.5} />)}</g>
        <path d={road("G 95,80 80,160 45,235 0,280")} stroke="#ecb878" strokeWidth="2" />
        <path d={road("A 507,400 517,440 515,510")} stroke="#ecb878" strokeWidth="2" />
        <path d={road("E 190,390 170,440 165,470")} stroke="#dccdb8" strokeWidth="7" />
      </g>
    </MapArt>
  );
}

const PINS = [[85, 282], [77, 401], [253, 384], [165, 475], [235, 571]];

const NAV = [
  ["Home", 75.7], ["Login", 76], ["Sign Up", 74], ["Services", 81.5],
  ["About Us", 70], ["Contact Us", 80.5], ["Terms and Conditions", 126],
];

function OutletCard({ last }) {
  return (
    <Card $last={last}>
      <OutletName>Outlet Name</OutletName>
      <Address>Address</Address>
      <FindButton $flush={last}>FIND ON GOOGLE MAP</FindButton>
    </Card>
  );
}

export default function App() {
  return (
    <Page>
      <Global />
      <Window>
        <TitleBar>
          <Lights><Light /><Light /><Light /></Lights>
          <WindowTitle>Clothes Gallery</WindowTitle>
        </TitleBar>
        <Header>
          <Avatar viewBox="0 0 38 38">
            <circle cx="19" cy="19" r="17.4" />
            <path d="M7.5 31.5C11 29.3 15.7 29.8 15.8 26.6C15.9 23.5 12.4 21.5 12.4 14.5C12 8.5 14.5 6 19 6S26 8.5 25.6 14.5C25.6 21.5 22.2 23.5 22.3 26.6C22.4 29.8 27 29.3 30.5 31.5" />
          </Avatar>
          <Greeting>
            <Hello>Hello!</Hello>
            <Username>Username</Username>
          </Greeting>
          <Nav>
            {NAV.map(([label, w]) => <NavLink key={label} $w={w}>{label}</NavLink>)}
          </Nav>
        </Header>
        <Main>
          <Column>
            <Logo>
              <LogoLines viewBox="0 0 137 105">
                <path d="M.5 .5H136.5V104.5H.5ZM.5 .5L57 43.5M136.5 .5L80 43.5M.5 104.5L57 61.5M136.5 104.5L80 61.5" />
              </LogoLines>
              <LogoText>LOGO</LogoText>
            </Logo>
            <Heading>OUR OUTLETS</Heading>
            <Blurb>
              <BlurbLine $w={227} />
              <BlurbLine $w={272} />
              <BlurbLine $w={260} />
              <BlurbLine $w={119} />
            </Blurb>
            <Cards>
              <OutletCard />
              <OutletCard />
              <OutletCard last />
            </Cards>
          </Column>
          <MapFrame>
            <CityMap />
            {PINS.map(([x, y]) => (
              <Marker key={x} width="18" height="27" viewBox="-0.5 -0.5 18 27" style={{ left: x, top: y }}>
                <path d="M9 0C4 0 .2 3.8 .2 8.8C.2 14 5 19 7 25.5Q9 28.5 11 25.5C13 19 17.8 14 17.8 8.8C17.8 3.8 14 0 9 0ZM9 4.5A4.4 4.4 0 1 1 9 13.3A4.4 4.4 0 0 1 9 4.5Z" fill="#f44336" fillRule="evenodd" />
              </Marker>
            ))}
            <Marker width="26" height="26" viewBox="0 0 26 26" style={{ left: 157, top: 314 }}>
              <path d="M24.5 1L14 25L12 24.5L11.7 14L.5 12.5L.8 11Z" fill="#2196f3" stroke="#2196f3" strokeLinejoin="round" />
            </Marker>
            <Compass>
              <CompassPoint $area="1 / 2" $pole>N</CompassPoint>
              <CompassPoint $area="2 / 1">W</CompassPoint>
              <CompassCross viewBox="0 0 52 52"><path d="M25.5 1V51M2 26.5H52" /></CompassCross>
              <CompassPoint $area="2 / 3">E</CompassPoint>
              <CompassPoint $area="3 / 2" $pole>S</CompassPoint>
            </Compass>
          </MapFrame>
        </Main>
        <Footer>
          <Slogan>A clean Start</Slogan>
          <Social>
            <SocialIcon viewBox="0 0 20 20" aria-label="Facebook">
              <rect x="1.3" y="1.3" width="17.4" height="17.4" rx="3.4" fill="currentColor" />
              <path d="M10.6 18.7V12H8.1V9.2H10.6V7.3C10.6 5 12 3.7 14.2 3.7C15.2 3.7 16 3.8 16.3 3.9V6.4H14.8C13.6 6.4 13.3 7 13.3 7.8V9.2H16.1L15.7 12H13.3V18.7Z" fill="#fff" />
            </SocialIcon>
            <SocialIcon viewBox="0 0 20 20" aria-label="Twitter">
              <rect x="1.3" y="1.3" width="17.4" height="17.4" rx="3.4" fill="currentColor" />
              <FaTwitter x="4.2" y="4.4" size={11.8} color="#fff" />
            </SocialIcon>
            <SocialIcon viewBox="0 0 20 20" fill="none" stroke="currentColor" strokeWidth="1.6" aria-label="Instagram">
              <rect x="2.1" y="2.1" width="15.8" height="15.8" rx="4.3" />
              <circle cx="10" cy="10" r="3.7" />
              <circle cx="14.6" cy="5.4" r="1.05" fill="currentColor" stroke="none" />
            </SocialIcon>
          </Social>
          <Legal>
            <LegalItem>Privacy Policy</LegalItem>
            <span>|</span>
            <LegalItem>Contact Us</LegalItem>
            <span>|</span>
            <LegalItem>Terms and Conditions</LegalItem>
          </Legal>
        </Footer>
      </Window>
    </Page>
  );
}
